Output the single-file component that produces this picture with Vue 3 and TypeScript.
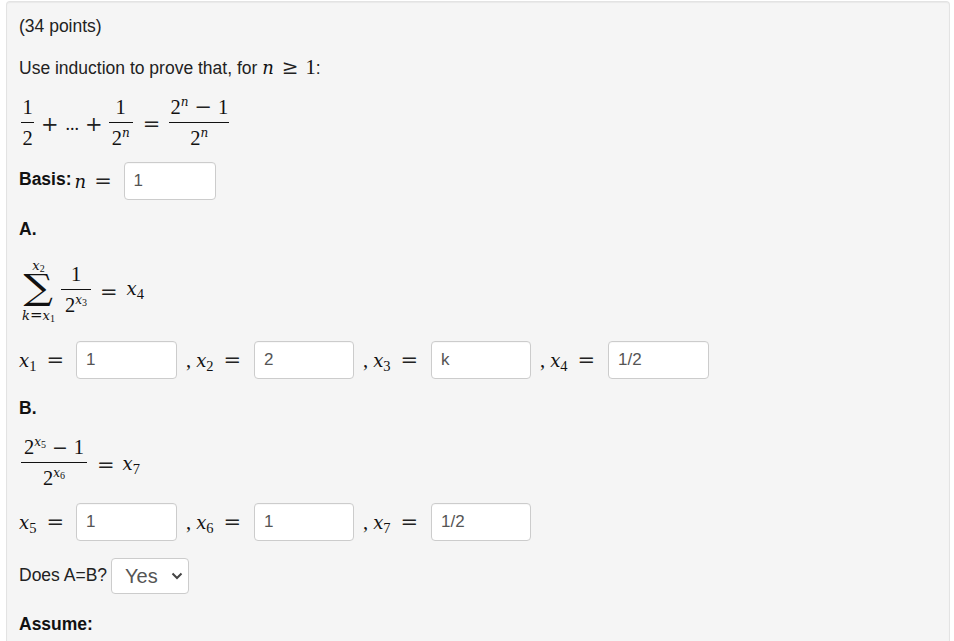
<script setup lang="ts">
interface Field { sym: string; sub: string; val: string; comma: boolean }
const rowA: Field[] = [
  { sym: 'x', sub: '1', val: '1', comma: false },
  { sym: 'x', sub: '2', val: '2', comma: true },
  { sym: 'x', sub: '3', val: 'k', comma: true },
  { sym: 'x', sub: '4', val: '1/2', comma: true },
]
const rowB: Field[] = [
  { sym: 'x', sub: '5', val: '1', comma: false },
  { sym: 'x', sub: '6', val: '1', comma: true },
  { sym: 'x', sub: '7', val: '1/2', comma: true },
]
</script>

<template>
  <div class="card">
    <div class="line">(34 points)</div>
    <div class="line m22">Use induction to prove that, for <span class="math intro"><i class="v">n</i><span class="op ge">≥</span><span>1</span></span>:</div>

    <div class="math eq m19 h53">
      <span class="frac f1"><span class="num">1</span><span class="den">2</span></span>
      <span class="op plus1">+</span><span class="dots">...</span><span class="op plus2">+</span>
      <span class="frac f2"><span class="num">1</span><span class="den">2<sup><i>n</i></sup></span></span>
      <span class="op eq1">=</span>
      <span class="frac f3"><span class="num">2<sup><i>n</i></sup><span class="op minus">−</span>1</span><span class="den">2<sup><i>n</i></sup></span></span>
    </div>

    <div class="row m12">
      <b class="lift">Basis:</b>
      <span class="math basis"><i class="v">n</i><span class="op eq2">=</span></span>
      <div class="field basis-field">1</div>
    </div>

    <div class="line m19"><b>A.</b></div>

    <div class="math eq m19 h67">
      <span class="sigma">
        <span class="lim upper"><i>x</i><small>2</small></span>
        <span class="big">∑</span>
        <span class="lim"><i>k</i><span class="limop">=</span><i>x</i><small>1</small></span>
      </span>
      <span class="frac f4"><span class="num">1</span><span class="den">2<sup><i>x</i><small>3</small></sup></span></span>
      <span class="op eq3">=</span>
      <span class="tail t4"><i class="v">x</i><sub>4</sub></span>
    </div>

    <div class="row row-a m16">
      <template v-for="f in rowA" :key="f.sub">
        <span class="math lab" :class="{ first: !f.comma }">
          <span v-if="f.comma" class="comma">,</span><i class="v">{{ f.sym }}</i><sub>{{ f.sub }}</sub><span class="op eq4">=</span>
        </span>
        <div class="field">{{ f.val }}</div>
      </template>
    </div>

    <div class="line m19"><b>B.</b></div>

    <div class="math eq m22 h50">
      <span class="frac f5"><span class="num">2<sup><i>x</i><small>5</small></sup><span class="op minus m5">−</span>1</span><span class="den">2<sup><i>x</i><small>6</small></sup></span></span>
      <span class="op eq5">=</span>
      <span class="tail t7"><i class="v">x</i><sub>7</sub></span>
    </div>

    <div class="row m13">
      <template v-for="f in rowB" :key="f.sub">
        <span class="math lab" :class="{ first: !f.comma }">
          <span v-if="f.comma" class="comma">,</span><i class="v">{{ f.sym }}</i><sub>{{ f.sub }}</sub><span class="op eq4">=</span>
        </span>
        <div class="field">{{ f.val }}</div>
      </template>
    </div>

    <div class="row m17 choose">
      <span class="lift-s">Does A=B?</span>
      <span class="select">
        <span>Yes</span>
        <svg width="12" height="8" viewBox="0 0 12 8"><path d="M1.5 1.5 6 6l4.5-4.5" fill="none" stroke="#444" stroke-width="2"/></svg>
      </span>
    </div>

    <div class="line m20"><b>Assume:</b></div>
  </div>
</template>

<style scoped>
.card {
  box-sizing: border-box;
  width: 944px;
  height: 640px;
  margin: 1px 0 0 6px;
  padding: 14px 12px;
  background: #f5f5f5;
  border: 1px solid #e3e3e3;
  border-bottom: 0;
  border-radius: 4px 4px 0 0;
  box-shadow: inset 0 1px 1px rgba(0, 0, 0, 0.05);
  font: 17.5px/20px "Liberation Sans", Arial, sans-serif;
  color: #222;
}
.line { height: 20px; white-space: nowrap; }
.row { display: flex; align-items: center; height: 38px; white-space: nowrap; }
b { color: #111; }
.lift { margin-bottom: 4px; }
.lift-s { margin-bottom: 2px; }
.m12 { margin-top: 12px; }
.m13 { margin-top: 13px; }
.m16 { margin-top: 16px; }
.m17 { margin-top: 17px; }
.m19 { margin-top: 19px; }
.m20 { margin-top: 20px; }
.m22 { margin-top: 22px; }
.h50 { height: 50px; }
.h53 { height: 53px; }
.h67 { height: 67px; }

.math { font-family: "Liberation Serif", "DejaVu Serif", serif; font-size: 20.5px; color: #111; }
.eq { display: flex; align-items: center; white-space: nowrap; }
.v, .math i { font-family: "DejaVu Serif", serif; font-style: italic; }
.v { font-size: 18px; }
.op { font-family: "DejaVu Serif", serif; font-weight: 400; font-size: 21px; color: #222; }
sub { font-size: 14.5px; line-height: 0; vertical-align: -4px; }
sup { font-size: 12px; line-height: 0; vertical-align: 8px; }
sup small, .lim small { font-size: 10px; vertical-align: -2px; }

.intro { line-height: 0; }
.ge { margin: 0 7px 0 8px; font-size: 20px; line-height: 0; }

.frac { display: inline-flex; flex-direction: column; align-items: center; flex: none; }
.num { padding: 0 0 4px; line-height: 21px; border-bottom: 1px solid #111; align-self: stretch; text-align: center; }
.den { line-height: 24px; padding-top: 3px; }
.f1 { width: 13px; margin-left: 2px; }
.f2 { width: 24px; }
.f3 { width: 60px; }
.f4 { width: 30px; margin-top: -2px; }
.f5 { width: 66px; margin-left: 2px; margin-top: -3px; }
.plus1 { margin-left: 7px; }
.dots { margin: 0 6px 0 7px; font-size: 18px; line-height: 16px; }
.plus2 { margin-right: 6px; }
.eq1 { margin: 0 9px 0 10px; }
.minus { margin: 0 6px; }
.m5 { font-size: 19px; }

.basis { margin-left: 3px; width: 49px; flex: none; }
.eq2 { margin-left: 8px; }
.field {
  box-sizing: border-box;
  flex: none;
  width: 100px;
  height: 38px;
  padding: 0 9px;
  font-size: 17px;
  line-height: 36px;
  background: #fff;
  border: 1px solid #ccc;
  border-radius: 4px;
  box-shadow: inset 0 1px 1px rgba(0, 0, 0, 0.03);
  color: #555;
}
.basis-field { width: 92px; }
.lab { flex: none; box-sizing: border-box; width: 77px; padding-left: 9px; white-space: nowrap; }
.lab.first { width: 57px; padding-left: 0; }
.lab.first + .field { width: 101px; }
.row-a .field:last-child { width: 101px; }
.comma { margin-right: 5px; }
.eq4 { margin-left: 10px; }
.eq3 { margin: 0 9px 0 9px; }
.eq5 { margin: 0 8px 0 10px; }
.tail { display: inline-block; }
.t4 { margin-bottom: 6px; }
.t7 { margin-bottom: 4px; }

.sigma { display: inline-flex; flex-direction: column; align-items: center; width: 39px; margin-right: 3px; flex: none; }
.lim { font-size: 13px; line-height: 14px; height: 14px; white-space: nowrap; }
.upper { margin: -3px 0 3px; }
.limop { font-family: "DejaVu Serif", serif; font-size: 15px; }
.lim i { font-size: 13px; }
.big {
  display: block;
  font-family: "DejaVu Serif", serif;
  font-size: 40px;
  line-height: 32px;
  height: 32px;
  margin: -2px 0 2px;
  transform: translateY(-3px) scale(1.03, 0.87);
}

.choose { height: 36px; }
.select {
  box-sizing: border-box;
  display: inline-flex;
  align-items: center;
  justify-content: space-between;
  width: 78px;
  height: 36px;
  margin-left: 4px;
  padding: 0 5px 0 13px;
  background: #fff;
  border: 1px solid #ccc;
  border-radius: 4px;
  font-size: 20px;
  color: #555;
}
</style>

<style>
html, body { margin: 0; height: 641px; overflow: hidden; background: #fff; }
</style>
